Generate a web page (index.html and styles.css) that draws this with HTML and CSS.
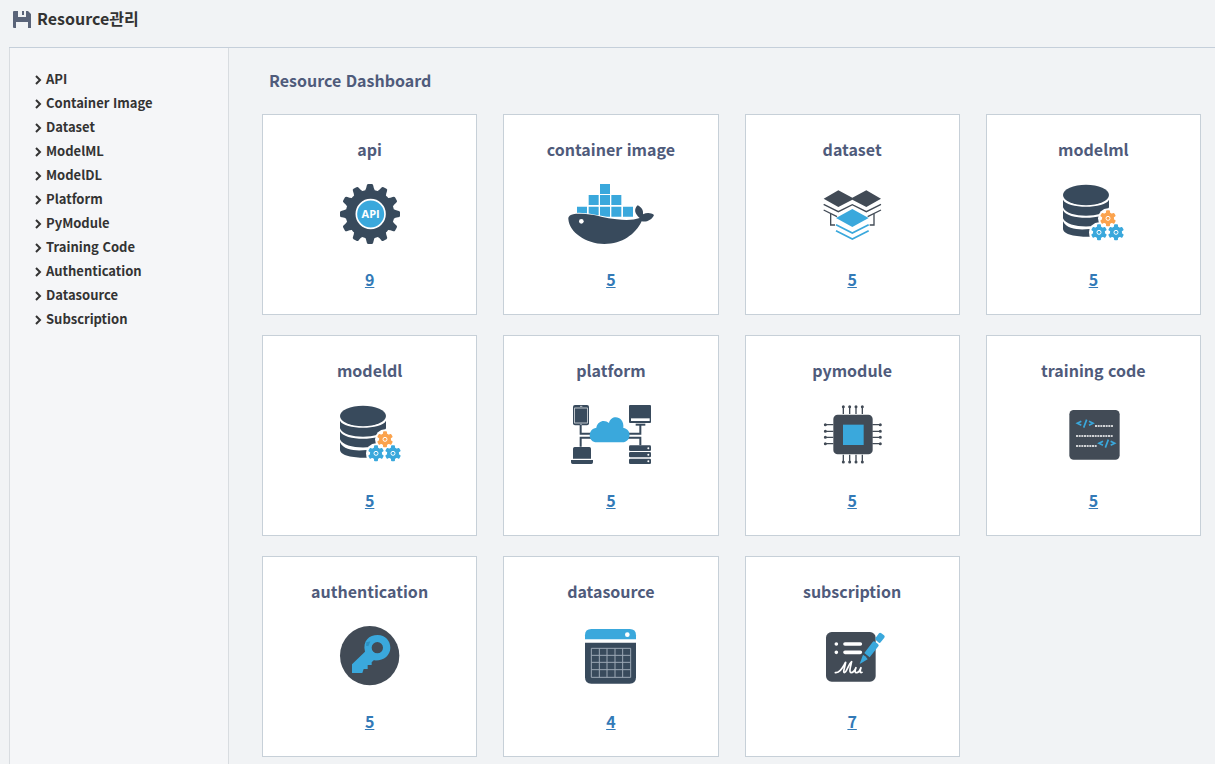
FILE: index.html
```html
<!DOCTYPE html>
<html lang="ko">
<head>
<meta charset="utf-8">
<title>Resource 관리</title>
<link rel="stylesheet" href="styles.css">
</head>
<body>
<svg class="defs" aria-hidden="true">
  <defs>
    <path id="tooth" d="M-15 -70 Q-11 -76 -10 -84 Q-10 -90 -5 -90 H5 Q10 -90 10 -84 Q11 -76 15 -70 Z"/>
    <g id="cog">
      <circle r="18"/>
      <g id="cog-pair"><rect x="-6" y="-24" width="12" height="48" rx="3"/></g>
      <use href="#cog-pair" transform="rotate(60)"/>
      <use href="#cog-pair" transform="rotate(120)"/>
      <circle r="6" fill="none" stroke="#fff" stroke-width="3"/>
    </g>
    <symbol id="database" viewBox="27 27 270 210">
      <g class="navy">
        <ellipse cx="141" cy="75" rx="69" ry="31"/>
        <path d="M72 89 C84 117 198 117 210 89 V112 C198 146 84 146 72 112 Z"/>
        <path d="M72 121 C84 151 198 151 210 121 V145 C198 178 84 178 72 145 Z"/>
        <path d="M72 154 C84 180 125 180 152 177 V200 C120 201 72 195 72 176 Z"/>
      </g>
      <g fill="#fff"><circle cx="207" cy="145" r="30"/><circle cx="180" cy="187" r="30"/><circle cx="231" cy="187" r="30"/></g>
      <use href="#cog" transform="translate(207 145)" fill="#fba34e"/>
      <use href="#cog" transform="translate(180 187)" class="blue"/>
      <use href="#cog" transform="translate(231 187)" class="blue"/>
    </symbol>
    <symbol id="chevron" viewBox="0 0 8 10"><path d="M2 1 L6 5 L2 9" fill="none" stroke="currentColor" stroke-width="2"/></symbol>
  </defs>
</svg>

<header class="page-header">
  <svg class="save-icon" viewBox="0 0 18 18" aria-hidden="true"><path fill-rule="evenodd" d="M1 0 H5 V6 H13 V0 H15 L18 3 V17 H15 V11 H3 V17 H1 Q0 17 0 16 V1 Q0 0 1 0 Z M9 0 H11 V4 H9 Z"/></svg>
  <h1>Resource관리</h1>
</header>

<div class="layout">
  <nav class="sidebar">
    <ul>
      <li><a href="#api"><svg><use href="#chevron"/></svg>API</a></li>
      <li><a href="#container"><svg><use href="#chevron"/></svg>Container Image</a></li>
      <li><a href="#dataset"><svg><use href="#chevron"/></svg>Dataset</a></li>
      <li><a href="#modelml"><svg><use href="#chevron"/></svg>ModelML</a></li>
      <li><a href="#modeldl"><svg><use href="#chevron"/></svg>ModelDL</a></li>
      <li><a href="#platform"><svg><use href="#chevron"/></svg>Platform</a></li>
      <li><a href="#pymodule"><svg><use href="#chevron"/></svg>PyModule</a></li>
      <li><a href="#training"><svg><use href="#chevron"/></svg>Training Code</a></li>
      <li><a href="#authentication"><svg><use href="#chevron"/></svg>Authentication</a></li>
      <li><a href="#datasource"><svg><use href="#chevron"/></svg>Datasource</a></li>
      <li><a href="#subscription"><svg><use href="#chevron"/></svg>Subscription</a></li>
    </ul>
  </nav>

  <main class="content">
    <h2>Resource Dashboard</h2>
    <div class="cards">

      <section class="card">
        <h3>api</h3>
        <svg class="icon" viewBox="14 147 270 210" aria-hidden="true">
          <g class="navy" transform="translate(149 252)">
            <circle r="73"/>
            <use href="#tooth"/><use href="#tooth" transform="rotate(30)"/><use href="#tooth" transform="rotate(60)"/>
            <use href="#tooth" transform="rotate(90)"/><use href="#tooth" transform="rotate(120)"/><use href="#tooth" transform="rotate(150)"/>
            <use href="#tooth" transform="rotate(180)"/><use href="#tooth" transform="rotate(210)"/><use href="#tooth" transform="rotate(240)"/>
            <use href="#tooth" transform="rotate(270)"/><use href="#tooth" transform="rotate(300)"/><use href="#tooth" transform="rotate(330)"/>
          </g>
          <circle class="blue" cx="151" cy="252" r="43" stroke="#fff" stroke-width="5"/>
          <text class="api-text" x="151" y="264">API</text>
        </svg>
        <a href="#api">9</a>
      </section>

      <section class="card">
        <h3>container image</h3>
        <svg class="icon" viewBox="78 147 270 210" aria-hidden="true">
          <g class="blue">
            <path d="M180 162h30v30h-30z M146 195h30v30h-30z M180 195h30v30h-30z M214 195h30v30h-30z"/>
            <path d="M111 230h30v30h-30z M146 230h30v30h-30z M180 230h30v30h-30z M214 230h30v30h-30z M249 230h30v30h-30z"/>
          </g>
          <path class="navy" stroke="#fff" stroke-width="5" paint-order="stroke" d="M85 267 C84 252 103 249 137 252 C172 255 195 265 230 268 C260 271 282 270 299 264 C285 252 280 239 293 226 C305 232 311 241 309 253 C321 247 333 248 342 255 C336 270 320 277 305 274 C286 313 247 342 193 342 C137 341 88 307 85 267 Z"/>
          <circle cx="124" cy="274" r="7" fill="#fff"/>
        </svg>
        <a href="#container">5</a>
      </section>

      <section class="card">
        <h3>dataset</h3>
        <svg class="icon" viewBox="22 27 270 210" aria-hidden="true">
          <g class="slate">
            <path d="M72 86 L116 61 L158 83 L200 61 L244 86 L200 111 L158 89 L116 111 Z"/>
          </g>
          <g fill="none" stroke="#424b56" stroke-width="4">
            <path d="M72 103 L116 125 L158 104 L200 125 L244 103"/>
            <path d="M72 120 L112 140 M204 140 L244 120"/>
            <path d="M93 132 V165 H106 M223 132 V165 H210"/>
          </g>
          <path class="blue" d="M109 144 L158 117 L207 144 L158 171 Z"/>
          <g fill="none" stroke="#3aa8dc" stroke-width="5"><path d="M109 164 L158 189 L207 164 M109 182 L158 207 L207 182"/></g>
        </svg>
        <a href="#dataset">5</a>
      </section>

      <section class="card">
        <h3>modelml</h3>
        <svg class="icon" aria-hidden="true"><use href="#database"/></svg>
        <a href="#modelml">5</a>
      </section>

      <section class="card">
        <h3>modeldl</h3>
        <svg class="icon" aria-hidden="true"><use href="#database"/></svg>
        <a href="#modeldl">5</a>
      </section>

      <section class="card">
        <h3>platform</h3>
        <svg class="icon" viewBox="33 30 270 210" aria-hidden="true">
          <g fill="none" stroke="#384a5c" stroke-width="6">
            <path d="M77 105 V131 H110 M77 170 V143 H110 M256 103 V131 H218 M256 166 V143 H218"/>
          </g>
          <rect class="navy" x="54" y="45" width="48" height="61" rx="6"/>
          <rect x="59" y="54" width="38" height="45" fill="none" stroke="#fff" stroke-width="2"/>
          <path d="M75 49 h7 M76 103 h4" stroke="#fff" stroke-width="2"/>
          <rect class="navy" x="222" y="45" width="66" height="54" rx="3"/>
          <path d="M228 85 h56 v8 h-56z" fill="#fff"/>
          <path class="navy" d="M242 101 h29 v6 h-29z"/>
          <path class="navy" d="M54 206 V176 Q54 171 59 171 H103 Q108 171 108 176 V206 Z M48 210 H114 V217 Q114 222 109 222 H53 Q48 222 48 217 Z"/>
          <g class="navy"><rect x="222" y="166" width="66" height="17" rx="4"/><rect x="222" y="186" width="66" height="16" rx="4"/><rect x="222" y="206" width="66" height="16" rx="4"/></g>
          <g fill="#fff"><circle cx="280" cy="175" r="3"/><circle cx="280" cy="194" r="3"/><circle cx="280" cy="214" r="3"/></g>
          <path class="blue" d="M126 157 C98 157 97 117 124 113 C128 91 150 88 162 99 C168 72 209 77 205 114 C232 117 229 157 202 157 Z"/>
        </svg>
        <a href="#platform">5</a>
      </section>

      <section class="card">
        <h3>pymodule</h3>
        <svg class="icon" viewBox="22 30 270 210" aria-hidden="true">
          <path d="M131 50 V72 M150 50 V72 M169 50 V72 M188 50 V72 M131 194 V216 M150 194 V216 M169 194 V216 M188 194 V216 M77 104 H101 M77 124 H101 M77 142 H101 M77 161 H101 M218 104 H242 M218 124 H242 M218 142 H242 M218 161 H242" stroke="#424b56" stroke-width="4"/>
          <path d="M131 50h0 M150 50h0 M169 50h0 M188 50h0 M131 216h0 M150 216h0 M169 216h0 M188 216h0 M77 104h0 M77 124h0 M77 142h0 M77 161h0 M242 104h0 M242 124h0 M242 142h0 M242 161h0" stroke="#424b56" stroke-width="9" stroke-linecap="round"/>
          <rect class="slate" x="101" y="74" width="118" height="119" rx="13"/>
          <path class="blue" d="M130 104h62v61h-62z"/>
        </svg>
        <a href="#pymodule">5</a>
      </section>

      <section class="card">
        <h3>training code</h3>
        <svg class="icon" viewBox="27 30 270 210" aria-hidden="true">
          <rect class="slate" x="91" y="60" width="151" height="149" rx="13"/>
          <g fill="none" stroke="#3aa8dc" stroke-width="5">
            <path d="M127 94 L115 100 L127 106 M143 89 L134 113 M150 94 L162 100 L150 106"/>
            <path d="M192 154 L180 160 L192 166 M208 149 L199 173 M215 154 L227 160 L215 166"/>
          </g>
          <path d="M168 108 H223 M111 138 H223 M111 168 H175" fill="none" stroke="#fff" stroke-width="5" stroke-dasharray="6 2"/>
        </svg>
        <a href="#training">5</a>
      </section>

      <section class="card">
        <h3>authentication</h3>
        <svg class="icon" viewBox="14 33 270 210" aria-hidden="true">
          <circle class="slate" cx="148" cy="137" r="89"/>
          <path class="blue" fill-rule="evenodd" d="M95 163 L134 125 C126 92 147 75 172 75 C195 75 210 93 210 113 C210 137 188 154 160 151 L154 157 V165 H142 V177 H130 L126 189 H95 Z M188 113 A17 17 0 1 0 154 113 A17 17 0 1 0 188 113 Z"/>
          <path d="M138 97 L150 94 L144 109 L137 107 Z" fill="#2e91c2"/>
        </svg>
        <a href="#authentication">5</a>
      </section>

      <section class="card">
        <h3>datasource</h3>
        <svg class="icon" viewBox="33 33 270 210" aria-hidden="true">
          <path class="blue" d="M90 88 V76 Q90 57 109 57 H224 Q243 57 243 76 V88 Z"/>
          <circle cx="217" cy="74" r="7" fill="#fff"/>
          <path class="navy" d="M90 98 H243 V202 Q243 221 224 221 H109 Q90 221 90 202 Z"/>
          <path d="M109 115 H227 V202 H109 Z M133 115 V202 M156 115 V202 M180 115 V202 M203 115 V202 M109 136 H227 M109 157 H227 M109 179 H227" fill="none" stroke="#9ca8b5" stroke-width="3"/>
        </svg>
        <a href="#datasource">4</a>
      </section>

      <section class="card">
        <h3>subscription</h3>
        <svg class="icon" viewBox="22 33 270 210" aria-hidden="true">
          <rect class="slate" x="79" y="66" width="149" height="149" rx="17"/>
          <path d="M110 102h0 M110 127h0 M136 102H182 M136 127H182" stroke="#fff" stroke-width="11" stroke-linecap="round"/>
          <path d="M107 188 C122 190 130 169 138 157 C136 169 129 188 134 188 C141 188 146 163 156 155 C153 169 147 187 154 188 C162 188 166 180 169 173 C165 183 165 189 172 188 C178 187 181 181 184 173 C180 184 181 190 187 187" fill="none" stroke="#fff" stroke-width="5" stroke-linecap="round" stroke-linejoin="round"/>
          <g class="blue">
            <path d="M180 162 L190 134 Q199 137 204 148 Z"/>
            <path d="M194 129 L219 96 Q222 92 227 96 L235 102 Q239 106 236 109 L210 142 Z"/>
            <path d="M228 83 L238 70 Q241 67 245 70 L253 76 Q257 79 254 83 L243 97 Q240 101 236 97 L229 91 Q225 87 228 83 Z"/>
          </g>
        </svg>
        <a href="#subscription">7</a>
      </section>

    </div>
  </main>
</div>
</body>
</html>
```
FILE: styles.css
```css
* { box-sizing: border-box; }

body {
  margin: 0;
  min-height: 100vh;
  display: flex;
  flex-direction: column;
  padding-left: 9px;
  background: #f1f3f5;
  color: #333;
  font-family: "Noto Sans CJK KR", "Noto Sans", sans-serif;
}

h1, h2, h3, ul { margin: 0; padding: 0; }
ul { list-style: none; }
.defs { display: block; width: 0; height: 0; }

.navy { fill: #384a5c; }
.slate { fill: #424b56; }
.blue { fill: #3aa8dc; }

.page-header {
  display: flex;
  align-items: center;
  gap: 6px;
  height: 48px;
  padding: 0 4px 12px;
  border-bottom: 1px solid #c5cfda;
}
.page-header h1 { font-size: 16px; line-height: 24px; font-weight: 700; }
.save-icon { width: 18px; height: 18px; margin-top: 4px; fill: #5a6479; }

.layout { flex: 1; display: flex; }

.sidebar {
  flex: 0 0 220px;
  padding: 19px 24px;
  background: #f5f6f8;
  border: solid #d8dce0;
  border-width: 0 1px;
}
.sidebar a {
  display: flex;
  align-items: center;
  gap: 4px;
  color: #333;
  font-size: 13px;
  line-height: 24px;
  font-weight: 700;
  text-decoration: none;
}
.sidebar svg { width: 8px; height: 10px; margin-top: 2px; }

.content { flex: 1; min-width: 0; padding: 19px 14px 7px 33px; }
.content h2 {
  padding-left: 7px;
  margin-bottom: 21px;
  color: #4f5b7b;
  font-size: 16px;
  line-height: 26px;
  font-weight: 700;
}

.cards { display: grid; grid-template-columns: repeat(4, 1fr); gap: 20px 26px; }
.card {
  display: flex;
  flex-direction: column;
  align-items: center;
  padding: 20px 0 22px;
  background: #fff;
  border: 1px solid #c7d0d8;
}
.card h3 { color: #4f5b7b; font-size: 16px; line-height: 28px; font-weight: 700; }
.card .icon { width: 90px; height: 70px; margin: 16px 0 17px; }
.card a { color: #337ab7; font-size: 16px; line-height: 26px; font-weight: 700; }

.api-text { fill: #fff; font-family: "Open Sans", sans-serif; font-size: 33px; font-weight: 700; text-anchor: middle; }
```
